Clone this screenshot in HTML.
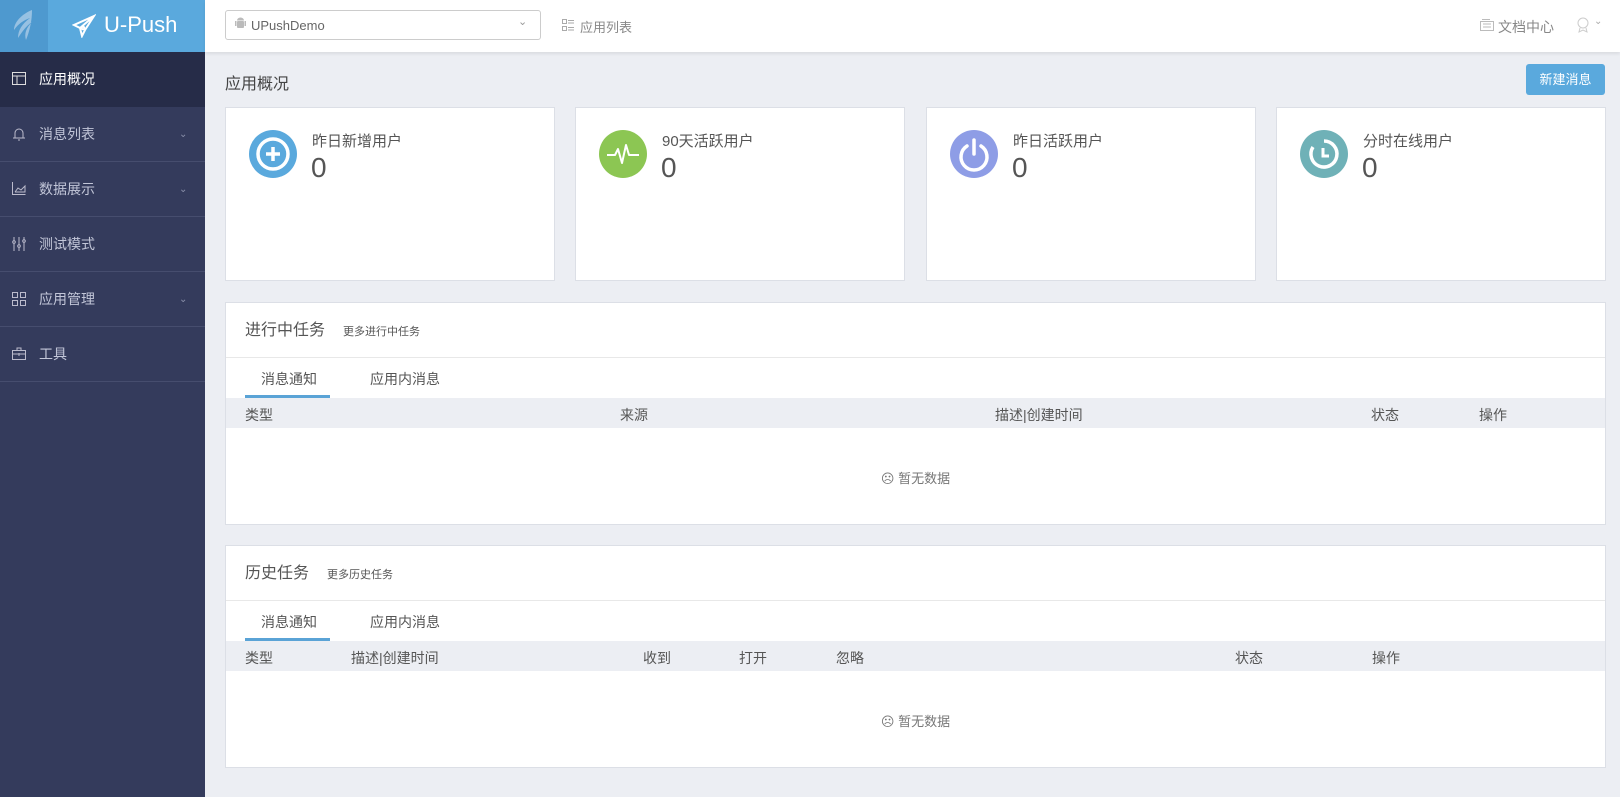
<!DOCTYPE html><html><head><meta charset="utf-8"><style>
*{margin:0;padding:0;box-sizing:border-box}
body{width:1620px;height:797px;background:#eceef3;font-family:"Liberation Sans","Noto Sans CJK SC",sans-serif;position:relative;overflow:hidden;color:#555}
.abs{position:absolute}
#side{left:0;top:52px;width:205px;height:745px;background:#343b5c}
.mi{position:absolute;left:0;width:205px;height:55px;border-bottom:1px solid #464d6e;color:#c2c6d8;font-size:14px;line-height:55px;padding-left:39px}
.mi svg{position:absolute;left:12px;top:20px}
.mi .ar{position:absolute;left:179px;top:0;font-size:10px;color:#8a90aa}
.card{position:absolute;top:107px;height:174px;width:330px;background:#fff;border:1px solid #dcdfe6}
.card .ic{position:absolute;left:23px;top:22px;width:48px;height:48px;border-radius:50%}
.card .lb{position:absolute;left:86px;top:22px;font-size:15px;color:#555}
.card .n{position:absolute;left:85px;top:44px;font-size:28px;color:#555}
.panel{position:absolute;left:225px;width:1381px;height:223px;background:#fff;border:1px solid #dcdfe6}
.ph{height:55px;border-bottom:1px solid #e8e8e8;padding-left:19px;line-height:55px;font-size:16px;color:#555}
.ph small{font-size:11px;margin-left:18px;color:#555}
.tabs{height:40px;position:relative;font-size:14px}
.tabs span{position:absolute;top:11px}
.tabs .ul{position:absolute;left:19px;top:37px;width:85px;height:3px;background:#5aa3d6}
.th{height:30px;background:#eceef3;position:relative;font-size:14px}
.th span{position:absolute;top:7px}
.empty{position:absolute;left:0;width:100%;text-align:center;font-size:13px;color:#777}
</style></head><body>
<div class="abs" style="left:0;top:0;width:48px;height:52px;background:#4e99cf"></div>
<svg class="abs" style="left:8px;top:8px" width="30" height="36" viewBox="0 0 30 36"><path d="M24 2 C14 6 6 14 6 22 C10 16 16 12 22 10 C14 16 10 22 10 30 C14 24 18 18 24 14 C18 20 16 26 18 32 C22 22 24 12 24 2Z" fill="#aacbe6" opacity=".8"/></svg>
<div class="abs" style="left:48px;top:0;width:157px;height:52px;background:#5aa9dd"></div>
<svg class="abs" style="left:72px;top:14px" width="24" height="24" viewBox="0 0 24 24" fill="none" stroke="#fff" stroke-width="2"><path d="M22 2 L2 11 L8 14 L10 22 L13 16 L22 2 Z M8 14 L22 2"/><circle cx="11" cy="14" r="1.3"/></svg>
<div class="abs" style="left:104px;top:12px;font-size:22px;color:#fff">U-Push</div>
<div class="abs" style="left:205px;top:0;width:1415px;height:52px;background:#fff;box-shadow:0 2px 3px rgba(0,0,0,.08)"></div>
<div class="abs" style="left:225px;top:10px;width:316px;height:30px;border:1px solid #ccc;border-radius:3px"></div>
<svg class="abs" style="left:235px;top:17px" width="11" height="14" viewBox="0 0 11 14" fill="#bbb"><rect x="2" y="4" width="7" height="7" rx="1"/><path d="M2 3.5a3.5 3 0 0 1 7 0z"/><rect x="0" y="4" width="1.5" height="5"/><rect x="9.5" y="4" width="1.5" height="5"/></svg>
<div class="abs" style="left:251px;top:18px;font-size:13px;color:#666">UPushDemo</div>
<div class="abs" style="left:518px;top:15px;font-size:11px;color:#999">&#8964;</div>
<svg class="abs" style="left:562px;top:19px" width="12" height="12" viewBox="0 0 12 12" fill="none" stroke="#aaa"><rect x=".5" y=".5" width="4" height="4"/><rect x=".5" y="7.5" width="4" height="4"/><path d="M6 1.5h6M6 4h6M6 8.5h6M6 11h6"/></svg>
<div class="abs" style="left:580px;top:17px;font-size:13px;color:#888">应用列表</div>
<svg class="abs" style="left:1480px;top:19px" width="14" height="12" viewBox="0 0 14 12" fill="none" stroke="#bbb"><rect x=".5" y="2.5" width="13" height="9"/><path d="M3 5h8M3 8h8M2 .5h8"/></svg>
<div class="abs" style="left:1498px;top:17px;font-size:14px;color:#888">文档中心</div>
<svg class="abs" style="left:1576px;top:17px" width="14" height="16" viewBox="0 0 14 16" fill="none" stroke="#ccc"><circle cx="7" cy="6" r="5"/><path d="M4 11l-1 4 4-2 4 2-1-4"/></svg>
<div class="abs" style="left:1594px;top:16px;font-size:10px;color:#aaa">&#8964;</div>

<div id="side" class="abs">
<div class="mi" style="top:0;background:#262c48;color:#fff;border-bottom:1px solid #262c48"><svg width="14" height="13" viewBox="0 0 14 13" fill="none" stroke="#ddd"><rect x=".5" y=".5" width="13" height="12"/><path d="M.5 4h13M5 4v8.5"/></svg>应用概况</div>
<div class="mi" style="top:55px"><svg width="14" height="14" viewBox="0 0 14 14" fill="none" stroke="#bbc"><path d="M3 11V6a4 4 0 0 1 8 0v5M1 11h12M6 13h2"/></svg>消息列表<span class="ar">&#8964;</span></div>
<div class="mi" style="top:110px"><svg width="14" height="13" viewBox="0 0 14 13" fill="none" stroke="#bbc"><path d="M.5 0v12.5h13M3 10l3-4 3 2 4-4v6H3"/></svg>数据展示<span class="ar">&#8964;</span></div>
<div class="mi" style="top:165px"><svg width="14" height="14" viewBox="0 0 14 14" fill="none" stroke="#bbc"><path d="M2 0v14M7 0v14M12 0v14"/><circle cx="2" cy="5" r="1.3" fill="#343b5c"/><circle cx="7" cy="9" r="1.3" fill="#343b5c"/><circle cx="12" cy="4" r="1.3" fill="#343b5c"/></svg>测试模式</div>
<div class="mi" style="top:220px"><svg width="14" height="14" viewBox="0 0 14 14" fill="none" stroke="#bbc"><rect x=".5" y=".5" width="5" height="5"/><rect x="8.5" y=".5" width="5" height="5"/><rect x=".5" y="8.5" width="5" height="5"/><rect x="8.5" y="8.5" width="5" height="5"/></svg>应用管理<span class="ar">&#8964;</span></div>
<div class="mi" style="top:275px"><svg width="14" height="13" viewBox="0 0 14 13" fill="none" stroke="#bbc"><rect x=".5" y="3.5" width="13" height="9"/><path d="M5 3.5V1h4v2.5M.5 7h13M7 6v3"/></svg>工具</div>
</div>

<div class="abs" style="left:225px;top:70px;font-size:16px;color:#444">应用概况</div>
<div class="abs" style="left:1526px;top:64px;width:79px;height:31px;background:#5aa9dd;border-radius:3px;color:#fff;font-size:13px;line-height:31px;text-align:center">新建消息</div>

<div class="card" style="left:225px"><div class="ic" style="background:#5aa9dd"><svg width="48" height="48" viewBox="0 0 48 48" fill="none" stroke="#fff" stroke-width="3.5"><circle cx="24" cy="24" r="15"/><path d="M24 17v14M17 24h14"/></svg></div><div class="lb">昨日新增用户</div><div class="n">0</div></div>
<div class="card" style="left:575px"><div class="ic" style="background:#8cc653"><svg width="48" height="48" viewBox="0 0 48 48" fill="none" stroke="#fff" stroke-width="2"><path d="M8 25h8l3-6 4 14 4-18 3 10h10" stroke-linejoin="round"/></svg></div><div class="lb">90天活跃用户</div><div class="n">0</div></div>
<div class="card" style="left:926px"><div class="ic" style="background:#8e9de6"><svg width="48" height="48" viewBox="0 0 48 48" fill="none" stroke="#fff" stroke-width="3.5" stroke-linecap="round"><path d="M17 16a13 13 0 1 0 14 0M24 10v14"/></svg></div><div class="lb">昨日活跃用户</div><div class="n">0</div></div>
<div class="card" style="left:1276px"><div class="ic" style="background:#6fb1b7"><svg width="48" height="48" viewBox="0 0 48 48" fill="none" stroke="#fff" stroke-width="3.5"><path d="M24 11a13 13 0 1 1-11 6"/><path d="M23 18v8h6" stroke-width="3"/></svg></div><div class="lb">分时在线用户</div><div class="n">0</div></div>

<div class="panel" style="top:302px">
<div class="ph">进行中任务<small>更多进行中任务</small></div>
<div class="tabs"><span style="left:35px">消息通知</span><span style="left:144px">应用内消息</span><div class="ul"></div></div>
<div class="th"><span style="left:19px">类型</span><span style="left:394px">来源</span><span style="left:769px">描述|创建时间</span><span style="left:1145px">状态</span><span style="left:1253px">操作</span></div>
<div class="empty" style="top:165px">☹ 暂无数据</div>
</div>
<div class="panel" style="top:545px">
<div class="ph">历史任务<small>更多历史任务</small></div>
<div class="tabs"><span style="left:35px">消息通知</span><span style="left:144px">应用内消息</span><div class="ul"></div></div>
<div class="th"><span style="left:19px">类型</span><span style="left:125px">描述|创建时间</span><span style="left:417px">收到</span><span style="left:513px">打开</span><span style="left:610px">忽略</span><span style="left:1009px">状态</span><span style="left:1146px">操作</span></div>
<div class="empty" style="top:165px">☹ 暂无数据</div>
</div>
</body></html>
